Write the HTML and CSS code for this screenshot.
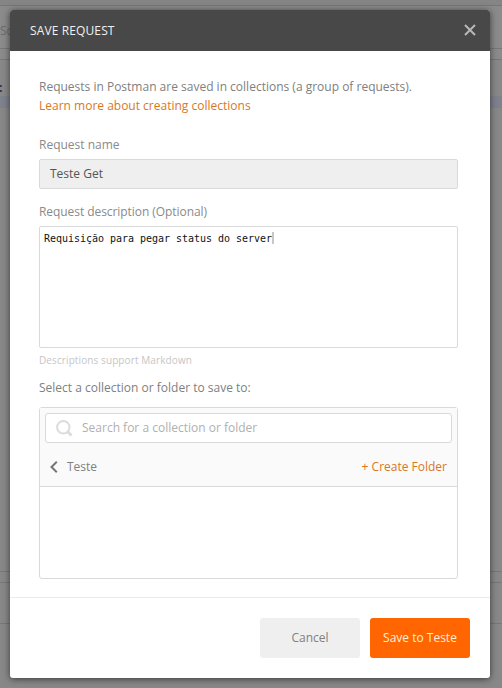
FILE: index.html
```html
<!DOCTYPE html>
<html lang="en">
<head>
<meta charset="utf-8">
<title>Save request</title>
<link rel="stylesheet" href="styles.css">
</head>
<body>
<div class="backdrop">
  <div class="strip strip-top"></div>
  <div class="strip strip-tabs"><span>Sc</span></div>
  <div class="strip strip-gap"></div>
  <div class="strip-code"><b>:</b></div>
  <div class="strip-active"></div>
  <div class="strip strip-body"></div>
  <div class="strip strip-gap-low"></div>
  <div class="strip strip-response"></div>
</div>
<main class="modal">
  <header class="modal-header">
    <h1>SAVE REQUEST</h1>
    <svg class="close" width="12" height="12" viewBox="0 0 12 12"><path d="M1 1l10 10M11 1L1 11"/></svg>
  </header>
  <section class="modal-body">
    <p class="intro">Requests in Postman are saved in collections (a group of requests).</p>
    <a class="learn">Learn more about creating collections</a>
    <div class="label name-label">Request name</div>
    <div class="name-input"><span>Teste Get</span></div>
    <div class="label desc-label">Request description (Optional)</div>
    <div class="editor"><span>Requisição para pegar status do server</span><i class="caret"></i></div>
    <div class="hint">Descriptions support Markdown</div>
    <div class="select-label">Select a collection or folder to save to:</div>
    <div class="picker">
      <div class="picker-top">
        <div class="search">
          <svg width="17" height="17" viewBox="0 0 17 17"><circle cx="7.3" cy="7.3" r="6.2"/><path d="M12 12l3.5 3.5"/></svg>
          <span>Search for a collection or folder</span>
        </div>
        <div class="crumbs">
          <svg width="8" height="12" viewBox="0 0 8 12"><path d="M6.8 .8L1.5 6l5.3 5.2"/></svg>
          <span class="crumb">Teste</span>
          <a class="create">+ Create Folder</a>
        </div>
      </div>
    </div>
  </section>
  <footer class="modal-footer">
    <div class="button cancel"><span>Cancel</span></div>
    <div class="button save"><span>Save to Teste</span></div>
  </footer>
</main>
</body>
</html>
```
FILE: styles.css
```css
* { box-sizing: border-box; }
body {
  margin: 0;
  width: 502px;
  height: 688px;
  overflow: hidden;
  padding: 10px 12px 10px 10px;
  font: 12px/18px "Open Sans", sans-serif;
  color: #808080;
  background: #888;
}
span, a { white-space: nowrap; }

/* dimmed application behind the dialog */
.backdrop {
  position: absolute;
  inset: 0;
  display: flex;
  flex-direction: column;
  overflow: hidden;
}
.strip { border-bottom: 1px solid #777; flex: none; }
.strip-top { height: 6px; background: #858585; }
.strip-tabs { height: 43px; padding-top: 16px; background: #8b8b8b; color: #6b6b6b; }
.strip-gap { height: 11px; background: #8b8b8b; }
.strip-code { height: 36px; flex: none; padding-top: 20px; color: #25304b; line-height: 16px; }
.strip-code b { display: block; margin-left: -1px; }
.strip-active { height: 12px; flex: none; background: #7e828d; }
.strip-body { height: 464px; }
.strip-gap-low { height: 11px; }
.strip-response { height: 41px; }

.modal {
  position: relative;
  width: 480px;
  height: 668px;
  display: flex;
  flex-direction: column;
  background: #fff;
  border-radius: 3px;
  overflow: hidden;
  box-shadow: 0 1px 7px rgba(0, 0, 0, .6);
}
.modal-header {
  height: 41px;
  flex: none;
  display: flex;
  align-items: center;
  justify-content: space-between;
  padding: 0 14px 0 20px;
  background: #484848;
}
h1 { margin: 0; font-size: 12px; font-weight: 400; letter-spacing: .12px; color: #f0f0f0; }
svg { flex: none; fill: none; }
.close { position: relative; top: -1px; stroke: #b8b8b8; stroke-width: 2; }

.modal-body { flex: 1; padding: 26px 32px 0 29px; }
.intro { margin: 0; line-height: 19px; }
.learn { display: block; line-height: 19px; color: #d9771f; }
.label { color: #8a8a8a; }
.name-label { margin-top: 21px; }
.name-input {
  margin-top: 5px;
  height: 30px;
  display: flex;
  align-items: center;
  padding-left: 10px;
  border: 1px solid #d9d9d9;
  border-radius: 2px;
  background: #efefef;
  color: #555;
}
.desc-label { margin-top: 14px; letter-spacing: -.06px; }
.editor {
  margin-top: 5px;
  height: 122px;
  display: flex;
  align-items: flex-start;
  padding: 5px 4px;
  border: 1px solid #d9d9d9;
  border-radius: 2px;
  font: 10px/13px "DejaVu Sans Mono", monospace;
  letter-spacing: -.02px;
  color: #111;
}
.caret { width: 2px; height: 12px; background: #c8c8c8; }
.hint { margin-top: 4px; height: 17px; font-size: 10px; line-height: 16px; letter-spacing: .1px; color: #c6c6c6; }
.select-label { margin-top: 10px; }
.picker {
  margin-top: 10px;
  height: 172px;
  border: 1px solid #d9d9d9;
  border-radius: 3px;
}
.picker-top { height: 79px; padding: 5px; background: #fafafa; border-bottom: 1px solid #d9d9d9; }
.search {
  height: 30px;
  display: flex;
  align-items: center;
  gap: 9px;
  padding-left: 10px;
  border: 1px solid #d9d9d9;
  border-radius: 3px;
  background: #fff;
  color: #b0b0b0;
}
.search svg { stroke: #dcdcdc; stroke-width: 2; }
.search path { stroke-width: 3; }
.crumbs { height: 38px; display: flex; align-items: center; padding: 10px 5px 0 5px; }
.crumbs svg { stroke: #757575; stroke-width: 2; }
.crumb { margin-left: 9px; }
.create { margin-left: auto; color: #d9771f; }

.modal-footer {
  height: 81px;
  flex: none;
  display: flex;
  justify-content: flex-end;
  gap: 10px;
  padding: 20px 20px 0;
  border-top: 1px solid #ececec;
}
.button {
  width: 100px;
  height: 40px;
  display: flex;
  align-items: center;
  justify-content: center;
  border-radius: 3px;
}
.cancel { background: #efefef; }
.save { background: #ff6500; color: #ffeeda; }
```
